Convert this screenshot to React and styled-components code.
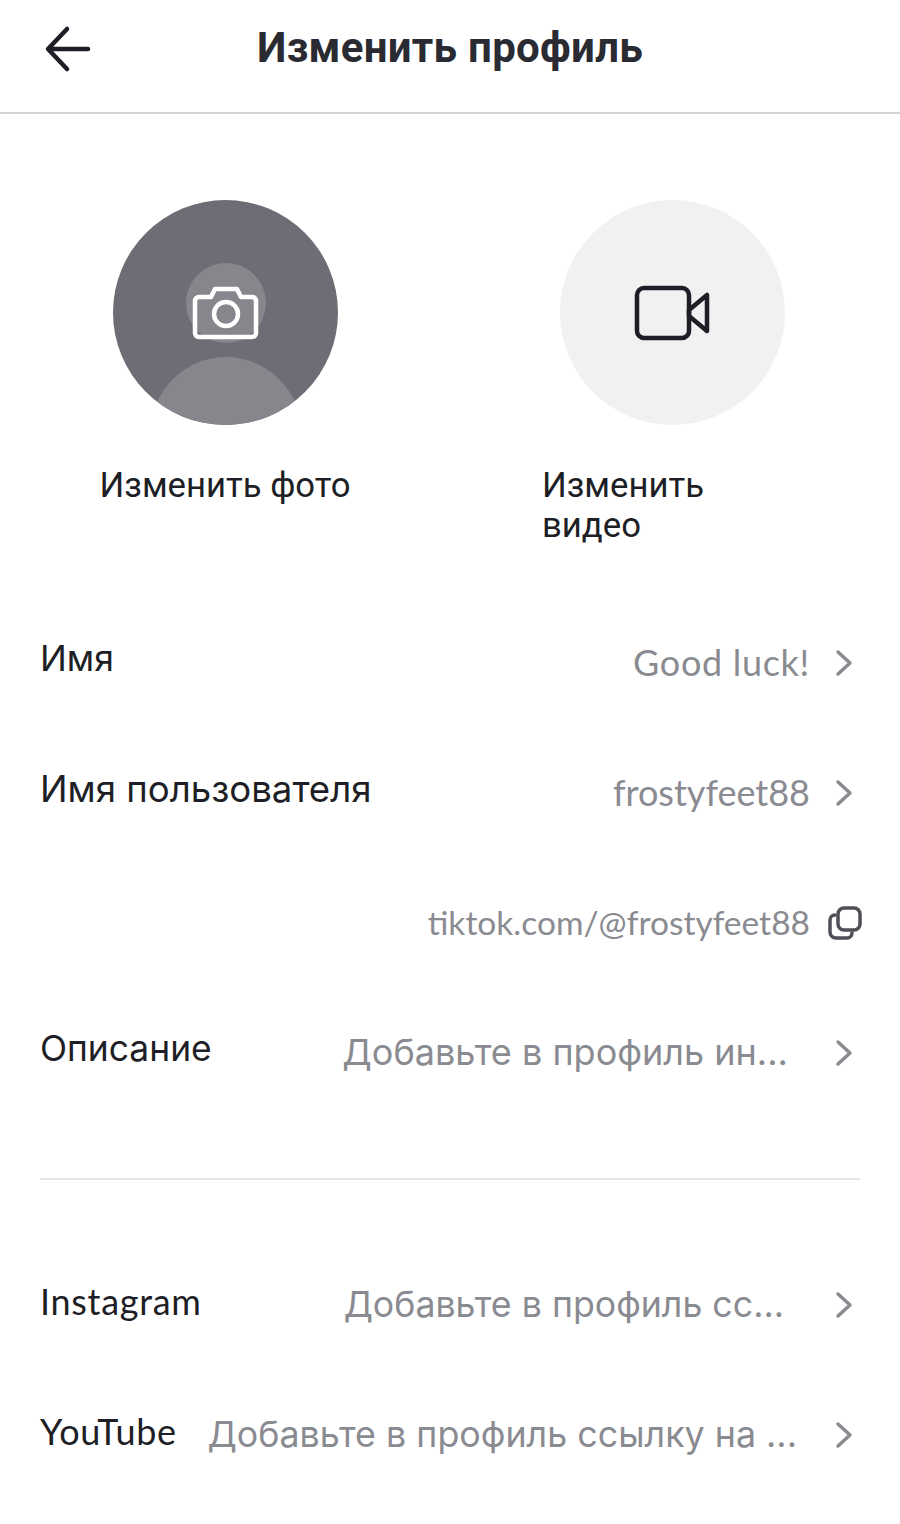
import React from 'react';
import styled, { createGlobalStyle } from 'styled-components';

const Global = createGlobalStyle`
    html, body {
        margin:0;
        padding:0;
        background:#fff;
    }
    body {
        font-family:Lato, "Liberation Sans", sans-serif;
    }
`

const Page = styled.div`
    width:900px;
    height:1524px;
    overflow:hidden;
    background:#fff;
    color:#1e1f26;
`

const Header = styled.header`
    height:112px;
    border-bottom:2px solid #d3d3d3;
    display:grid;
    grid-template-columns:1fr auto 1fr;
    align-items:center;
`

const BackButton = styled.div`
    padding:0 0 14px 43px;
    display:flex;
    align-items:center;
`

const Title = styled.h1`
    margin:0 0 16px;
    font-family:Roboto, sans-serif;
    font-size:42px;
    line-height:48px;
    font-weight:700;
    letter-spacing:0.3px;
    color:#2a2b32;
`

const MediaRow = styled.section`
    display:flex;
    padding:86px 0 0 95px;
    gap:187px;
    height:396px;
    box-sizing:border-box;
    margin-bottom:87px;
`

const MediaItem = styled.div`
    width:260px;
    display:flex;
    flex-direction:column;
    align-items:center;
`

const Circle = styled.div`
    position:relative;
    flex:none;
    width:225px;
    height:225px;
    border-radius:50%;
    overflow:hidden;
    background:${p => p.$bg};
    display:flex;
    align-items:center;
    justify-content:center;
`

const Head = styled.div`
    position:absolute;
    left:73px;
    top:63px;
    width:80px;
    height:80px;
    border-radius:50%;
    background:#86878c;
`

const CameraIcon = styled.svg`
    position:relative;
    margin:0 0 0 1px;
`

const Shoulders = styled.div`
    position:absolute;
    left:38px;
    top:157px;
    width:150px;
    height:150px;
    border-radius:50%;
    background:#86878c;
`

const MediaLabel = styled.div`
    width:100%;
    margin-top:40px;
    font-family:Roboto, sans-serif;
    font-size:34.7px;
    line-height:40px;
    text-align:${p => p.$align};
`

const Row = styled.div`
    height:130px;
    padding:0 47px 0 40px;
    display:flex;
    align-items:center;
    justify-content:space-between;
`

const Label = styled.div`
    font-family:${p => (p.$latin ? 'Lato' : 'Inter')}, "Liberation Sans", sans-serif;
    font-size:${p => p.$size}px;
    letter-spacing:${p => (p.$latin ? 0.7 : 0)}px;
    line-height:40px;
    white-space:nowrap;
    margin-top:-6px;
`

const Value = styled.div`
    display:flex;
    align-items:center;
    justify-content:flex-end;
    flex:1;
    min-width:0;
    margin-top:2px;
`

const ValueText = styled.span`
    font-family:${p => (p.$latin ? 'Lato' : 'Inter')}, "Liberation Sans", sans-serif;
    font-size:${p => p.$size}px;
    letter-spacing:${p => p.$spacing || 0}px;
    line-height:40px;
    margin-top:-2px;
    color:#8a8b91;
    white-space:nowrap;
`

const ChevronBox = styled.span`
    display:flex;
    flex:none;
    width:18px;
    margin-left:${p => p.$gap}px;
`

const CopyBox = styled.span`
    display:flex;
    flex:none;
    margin:0 -9px 0 18px;
`

const Divider = styled.hr`
    margin:61px 40px 59px;
    height:2px;
    border:0;
    background:#e6e6e7;
`

const Chevron = () => (
    <svg width="18" height="28" viewBox="0 0 18 28" fill="none">
        <path d="M3 3l12 11L3 25" stroke="#8a8b91" strokeWidth="3.5" strokeLinecap="round" strokeLinejoin="round" />
    </svg>
)

const rows = [
    { label: 'Имя', size: 35.6, value: 'Good luck!', spacing: 0.7 },
    { label: 'Имя пользователя', size: 36.6, value: 'frostyfeet88', spacing: 0 },
]

class App extends React.Component {
    render() {
        return (
            <Page>
                <Global />
                <Header>
                    <BackButton>
                        <svg width="48" height="48" viewBox="0 0 48 48" fill="none">
                            <path d="M45 24H7M24 4L5 24l19 20" stroke="#1e1f26" strokeWidth="4.5" strokeLinecap="round" strokeLinejoin="round" />
                        </svg>
                    </BackButton>
                    <Title>Изменить профиль</Title>
                    <div />
                </Header>
                <MediaRow>
                    <MediaItem>
                        <Circle $bg="#6d6e75">
                            <Head />
                            <Shoulders />
                            <CameraIcon width="68" height="54" viewBox="0 0 68 54" fill="none">
                                <path d="M7 11h12l4-8h22l4 8h11a4 4 0 0 1 4 4v32a4 4 0 0 1-4 4H7a4 4 0 0 1-4-4V15a4 4 0 0 1 4-4z" stroke="#fff" strokeWidth="4.5" strokeLinejoin="round" />
                                <circle cx="34" cy="28" r="12" stroke="#fff" strokeWidth="4.5" />
                            </CameraIcon>
                        </Circle>
                        <MediaLabel $align="center">Изменить фото</MediaLabel>
                    </MediaItem>
                    <MediaItem>
                        <Circle $bg="#f1f1f2">
                            <svg width="76" height="56" viewBox="0 0 76 56" fill="none">
                                <rect x="3" y="3" width="52" height="50" rx="7" stroke="#1e1f26" strokeWidth="4.5" />
                                <path d="M55 25l18-15v36L55 31z" stroke="#1e1f26" strokeWidth="4.5" strokeLinejoin="round" />
                            </svg>
                        </Circle>
                        <MediaLabel $align="left">Изменить видео</MediaLabel>
                    </MediaItem>
                </MediaRow>

                {rows.map(r => (
                    <Row key={r.label}>
                        <Label $size={r.size}>{r.label}</Label>
                        <Value>
                            <ValueText $latin $size={36} $spacing={r.spacing}>{r.value}</ValueText>
                            <ChevronBox $gap={25}><Chevron /></ChevronBox>
                        </Value>
                    </Row>
                ))}
                <Row>
                    <Value>
                        <ValueText $latin $size={33.5}>tiktok.com/@frostyfeet88</ValueText>
                        <CopyBox>
                            <svg width="34" height="34" viewBox="0 0 34 34" fill="none">
                                <rect x="10" y="2" width="22" height="22" rx="6" stroke="#4f5056" strokeWidth="3.5" />
                                <path d="M7 9a5 5 0 0 0-5 5v12a6 6 0 0 0 6 6h11a5 5 0 0 0 5-5" stroke="#4f5056" strokeWidth="3.5" strokeLinecap="round" />
                            </svg>
                        </CopyBox>
                    </Value>
                </Row>
                <Row>
                    <Label $size={35.4}>Описание</Label>
                    <Value>
                        <ValueText $size={36}>Добавьте в профиль ин...</ValueText>
                        <ChevronBox $gap={47}><Chevron /></ChevronBox>
                    </Value>
                </Row>
                <Divider />
                <Row>
                    <Label $latin $size={36}>Instagram</Label>
                    <Value>
                        <ValueText $size={35.7}>Добавьте в профиль сс...</ValueText>
                        <ChevronBox $gap={51}><Chevron /></ChevronBox>
                    </Value>
                </Row>
                <Row>
                    <Label $latin $size={36}>YouTube</Label>
                    <Value>
                        <ValueText $size={35.8}>Добавьте в профиль ссылку на ...</ValueText>
                        <ChevronBox $gap={38}><Chevron /></ChevronBox>
                    </Value>
                </Row>
            </Page>
        )
    }
}

export default App;
